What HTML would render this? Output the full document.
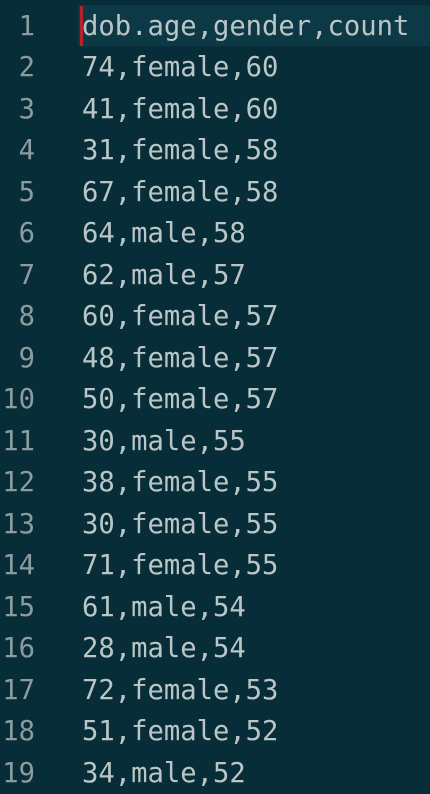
<!DOCTYPE html>
<html><head><style>
html,body{margin:0;padding:0;background:#062d38;width:430px;height:794px;overflow:hidden}
.hl{position:absolute;left:78px;top:5px;width:352px;height:41px;background:#0c3945}
.cur{position:absolute;left:80px;top:6px;width:3px;height:40px;background:#b0242a}
.l{position:absolute;left:0;height:41.5px;line-height:41.5px;font-family:"DejaVu Sans Mono","Liberation Mono",monospace;font-size:27.2px;white-space:pre}
.n{position:absolute;left:0;width:35px;text-align:right;color:#8c9c9e}
.t{position:absolute;left:82px;color:#bac6c6}
</style></head><body>
<div class="hl"></div>
<div id="c"></div>
<script>
var d=["dob.age,gender,count","74,female,60","41,female,60","31,female,58","67,female,58","64,male,58","62,male,57","60,female,57","48,female,57","50,female,57","30,male,55","38,female,55","30,female,55","71,female,55","61,male,54","28,male,54","72,female,53","51,female,52","34,male,52"];
var h="";for(var i=0;i<d.length;i++){h+='<div class="l" style="top:'+(5.5+i*41.5)+'px"><span class="n">'+(i+1)+'</span><span class="t">'+d[i]+'</span></div>';}
document.getElementById("c").innerHTML=h;
</script>
<div class="cur"></div>
</body></html>
